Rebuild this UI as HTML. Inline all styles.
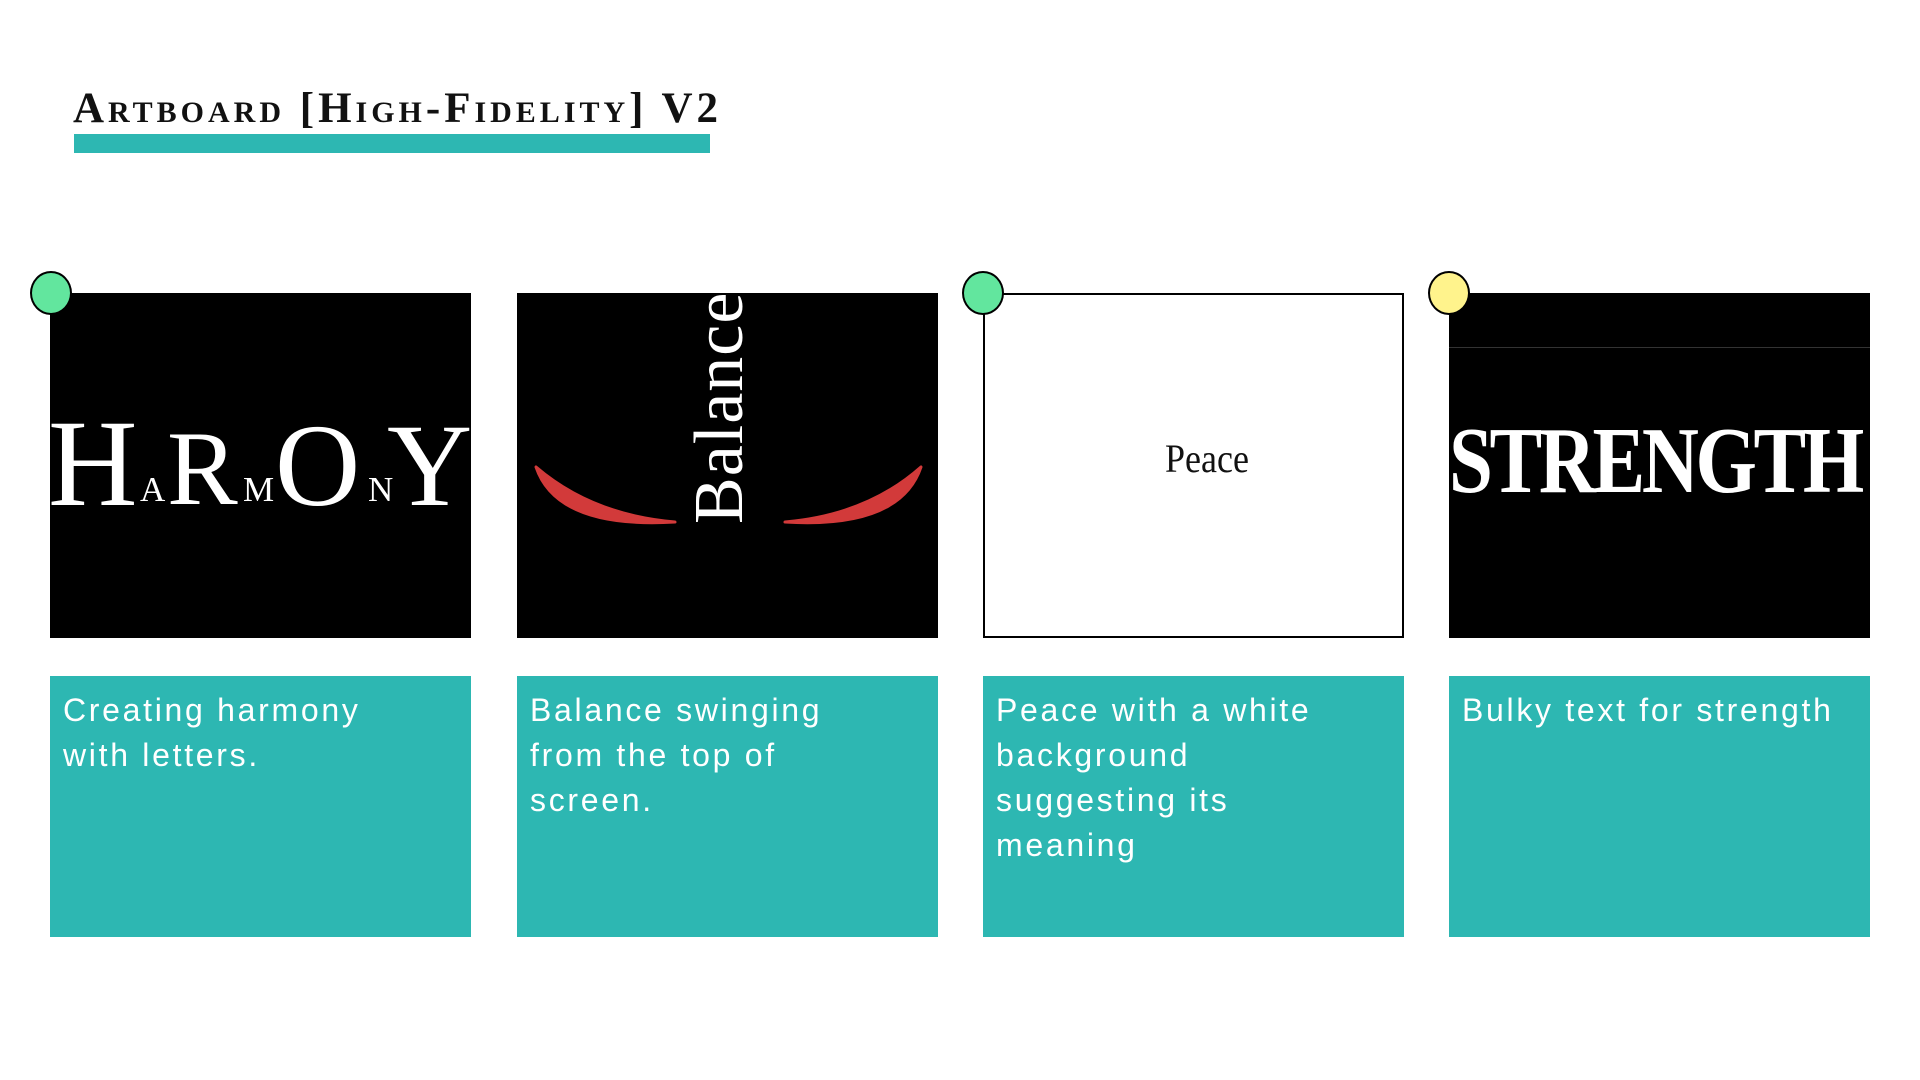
<!DOCTYPE html>
<html><head><meta charset="utf-8"><style>
*{margin:0;padding:0;box-sizing:border-box}
body{width:1920px;height:1080px;background:#fff;position:relative;overflow:hidden;font-family:"Liberation Sans",sans-serif}
.abs{position:absolute}
.title{left:73px;top:84px;font-family:"Liberation Serif",serif;font-weight:bold;font-variant:small-caps;font-size:43px;letter-spacing:4px;color:#111;white-space:nowrap}
.bar{left:74px;top:134px;width:636px;height:19px;background:#2db7b2}
.card{top:293px;width:421px;height:345px;background:#000;overflow:hidden}
.tbox{top:676px;width:421px;height:261px;background:#2db7b2;color:#fff;font-size:32px;letter-spacing:2.7px;line-height:45px;padding:12px 13px;white-space:nowrap}
.dot{width:42px;height:44px;border-radius:50%;border:2px solid #000}
.serif{font-family:"Liberation Serif",serif;color:#fff}
.h{position:absolute;line-height:1;font-family:"Liberation Serif",serif;color:#fff}
</style></head><body>
<div class="abs title">Artboard [High-Fidelity] V2</div>
<div class="abs bar"></div>

<div class="abs card" style="left:50px">
  <div class="abs" style="left:0;top:206px;width:421px;height:0">
    <span class="h" style="left:-2px;bottom:-27px;font-size:124px">H</span>
    <span class="h" style="left:90px;bottom:-8px;font-size:35px">A</span>
    <span class="h" style="left:117px;bottom:-23px;font-size:106px">R</span>
    <span class="h" style="left:193px;bottom:-8px;font-size:35px">M</span>
    <span class="h" style="left:225px;bottom:-26px;font-size:118px">O</span>
    <span class="h" style="left:318px;bottom:-8px;font-size:35px">N</span>
    <span class="h" style="left:337px;bottom:-26px;font-size:118px">Y</span>
  </div>
</div>

<div class="abs card" style="left:517px">
  <svg class="abs" style="left:0;top:0" width="421" height="345">
    <path d="M19 174 Q40 236 158 229 Q75 222 19 174Z" fill="#d23a3a" stroke="#d23a3a" stroke-width="3" stroke-linejoin="round"/>
    <path d="M404 174 Q383 236 268 229 Q350 222 404 174Z" fill="#d23a3a" stroke="#d23a3a" stroke-width="3" stroke-linejoin="round"/>
  </svg>
  <div class="abs serif" style="left:168px;top:231px;font-size:70px;line-height:1;transform-origin:0 0;transform:rotate(-90deg);white-space:nowrap;letter-spacing:1px">Balance</div>
</div>

<div class="abs card" style="left:983px;background:#fff;border:2px solid #000">
  <div class="abs" style="left:0;width:417px;top:140px;text-align:center;padding-left:30px;font-family:'Liberation Serif',serif;font-size:40px;color:#111;transform:scaleX(.9)">Peace</div>
</div>

<div class="abs card" style="left:1449px">
  <div class="abs" style="left:0;top:54px;width:421px;height:1px;background:#333"></div>
  <div class="abs serif" style="left:0;top:121px;font-size:94px;line-height:1;white-space:nowrap;transform-origin:0 0;transform:scaleX(.84);letter-spacing:-4px;font-weight:bold">STRENGTH</div>
</div>

<div class="abs dot" style="left:30px;top:271px;background:#62e69e"></div>
<div class="abs dot" style="left:962px;top:271px;background:#62e69e"></div>
<div class="abs dot" style="left:1428px;top:271px;background:#fff38c"></div>

<div class="abs tbox" style="left:50px">Creating harmony<br>with letters.</div>
<div class="abs tbox" style="left:517px">Balance swinging<br>from the top of<br>screen.</div>
<div class="abs tbox" style="left:983px">Peace with a white<br>background<br>suggesting its<br>meaning</div>
<div class="abs tbox" style="left:1449px">Bulky text for strength</div>
</body></html>
